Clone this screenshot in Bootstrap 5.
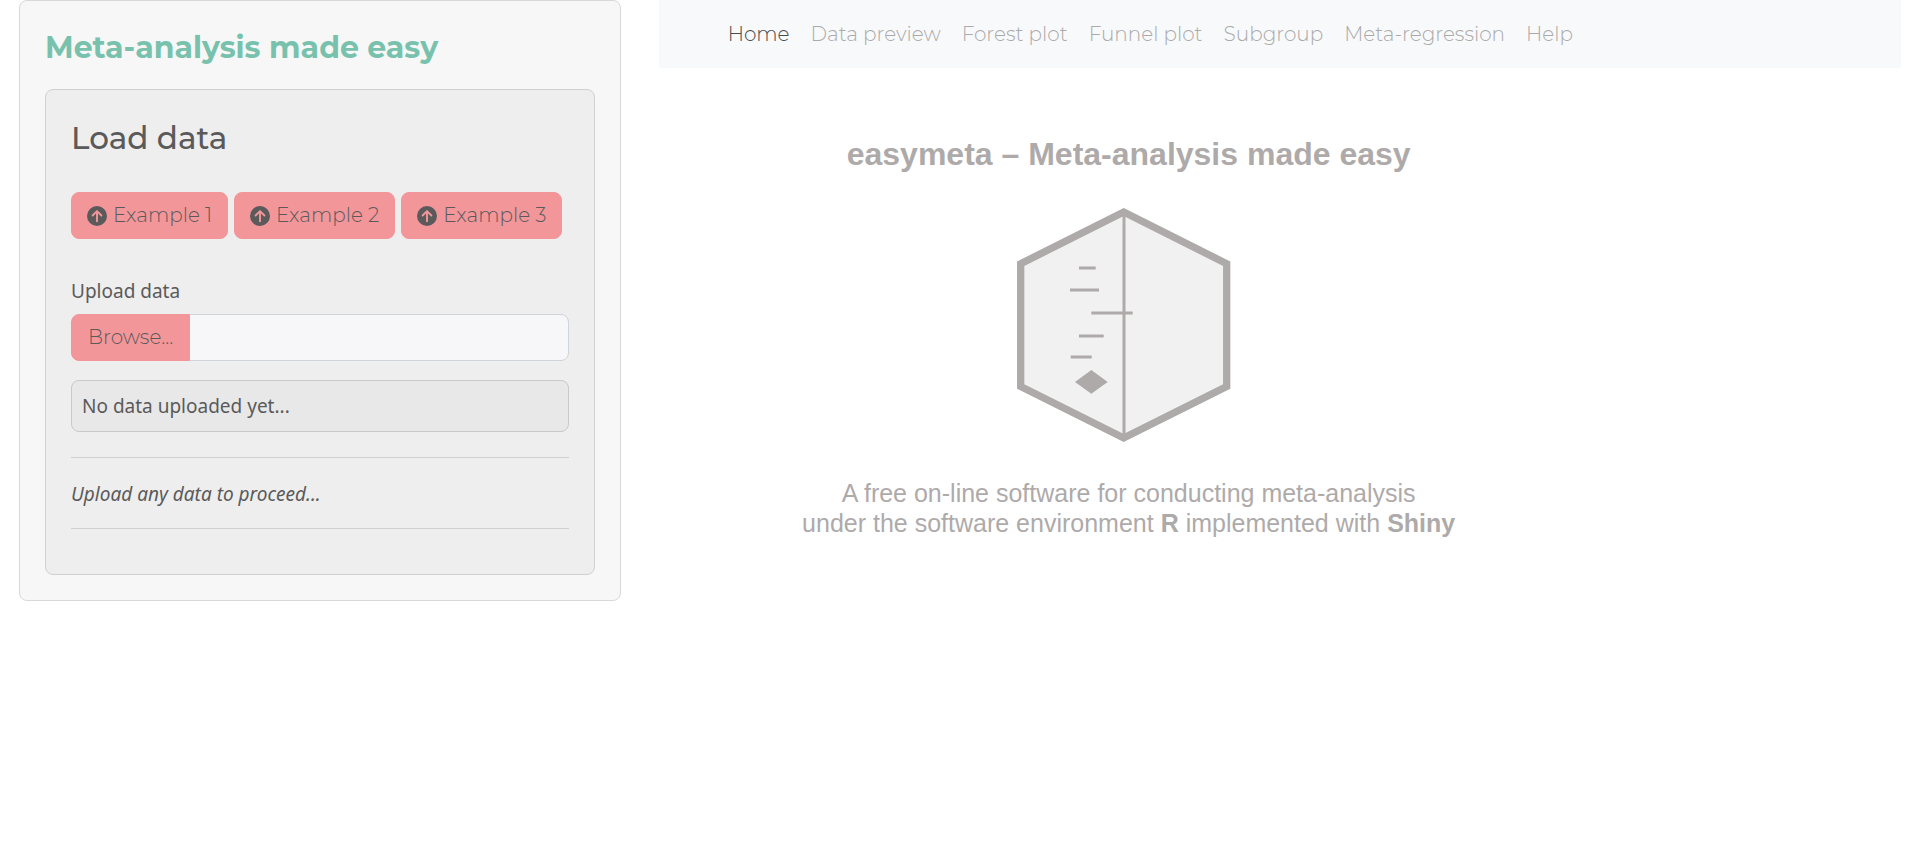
<!DOCTYPE html>
<html lang="en">
<head>
<meta charset="utf-8">
<meta name="viewport" content="width=device-width, initial-scale=1">
<title>easymeta</title>
<link href="https://cdn.jsdelivr.net/npm/bootstrap@5.3.0/dist/css/bootstrap.min.css" rel="stylesheet">
<style>
  body { font-family: "Noto Sans", sans-serif; font-size: 19px; line-height: 30px; color: #5a5a5a; background: #fff; }
  .page { padding: 0 17px 0 0; }
  .side-col { padding: 0 13px 0 19px; }
  .main-col { padding: 0 0 0 25px; }
  .panel { border: 1px solid #d8d8d8; border-radius: 8px; background: #f7f7f7; padding: 25px; }
  .panel .panel { background: #eee; border-color: #d0d0d0; padding-bottom: 45px; }
  .brand, .panel-title, .btn, .nav-link { font-family: Montserrat, Inter, sans-serif; }
  .brand { font-size: 30px; line-height: 36px; font-weight: 700; color: #78c2ad; margin: 4px 0 23px; }
  .panel-title { font-size: 31px; line-height: 36px; font-weight: 500; margin: 5px 0 36px; }
  .btn-pink { --bs-btn-bg: #f3969a; --bs-btn-color: #5a5a5a; --bs-btn-border-color: #f3969a; --bs-btn-hover-bg: #ee8589; --bs-btn-hover-border-color: #ee8589; --bs-btn-border-radius: 8px; font-size: 20px; line-height: 31px; font-weight: 300; padding: 7px 15px; }
  .btn-pink svg { width: 20px; height: 20px; }
  .examples { gap: 6px; margin-bottom: 37px; }
  .examples .btn { gap: 6px; }
  .form-label { margin-bottom: 8px; }
  .file-row { margin-bottom: 19px; }
  .file-row .btn { padding: 7px 16px; }
  .file-row .form-control { background: #f7f7f9; border-color: #ced4da; border-radius: 8px; height: 47px; }
  .status-box { background: #e8e8e8; border: 1px solid #c9c9c9; border-radius: 8px; padding: 10px; }
  .notes { padding-top: 25px; }
  .rule { margin: 0; border-top: 1px solid #aaa; opacity: .45; }
  .hint { padding: 21px 0 19px; }
  .topbar { background: #f8f9fa; padding: 12px 59px; min-height: 68px; }
  .topbar .nav { column-gap: 1px; }
  .topbar .nav-link { font-size: 20px; line-height: 30px; font-weight: 300; padding: 7px 10px; color: #aaa; }
  .topbar .nav-link.active { color: #4a4a4a; }
  .hero { width: 940px; max-width: 100%; padding-top: 68px; font-family: "Liberation Sans", Arial, sans-serif; color: #aeaaaa; }
  .hero-title { font-size: 32px; line-height: 36px; font-weight: 700; margin-bottom: 36px; }
  .hero-text { font-size: 25px; line-height: 30px; margin: 35px 0 0; }
</style>
</head>
<body>
<svg class="d-none" aria-hidden="true">
  <symbol id="arrow-up" viewBox="0 0 20 20">
    <circle cx="10" cy="10" r="10" fill="#5a5a5a"/>
    <path d="M10 15.3V5.5M5.600 9.500 10 5.100l4.400 4.400" fill="none" stroke="#f3969a" stroke-width="1.900" stroke-linecap="round" stroke-linejoin="round"/>
  </symbol>
</svg>
<div class="page">
  <div class="row g-0">
    <aside class="col-4 side-col">
      <div class="panel">
        <h1 class="brand">Meta-analysis made easy</h1>
        <div class="panel">
          <h2 class="panel-title">Load data</h2>
          <div class="d-flex flex-wrap examples">
            <button type="button" class="btn btn-pink d-inline-flex align-items-center"><svg aria-hidden="true"><use href="#arrow-up"/></svg>Example 1</button>
            <button type="button" class="btn btn-pink d-inline-flex align-items-center"><svg aria-hidden="true"><use href="#arrow-up"/></svg>Example 2</button>
            <button type="button" class="btn btn-pink d-inline-flex align-items-center"><svg aria-hidden="true"><use href="#arrow-up"/></svg>Example 3</button>
          </div>
          <label class="form-label d-block" for="upload">Upload data</label>
          <div class="input-group file-row">
            <button type="button" class="btn btn-pink">Browse...</button>
            <input type="text" class="form-control" id="upload" readonly>
          </div>
          <div class="status-box">No data uploaded yet...</div>
          <div class="notes">
            <hr class="rule">
            <div class="hint fst-italic">Upload any data to proceed...</div>
            <hr class="rule">
          </div>
        </div>
      </div>
    </aside>
    <main class="col-8 main-col">
      <nav class="topbar">
        <ul class="nav">
          <li class="nav-item"><a class="nav-link active" href="#" aria-current="page">Home</a></li>
          <li class="nav-item"><a class="nav-link" href="#">Data preview</a></li>
          <li class="nav-item"><a class="nav-link" href="#">Forest plot</a></li>
          <li class="nav-item"><a class="nav-link" href="#">Funnel plot</a></li>
          <li class="nav-item"><a class="nav-link" href="#">Subgroup</a></li>
          <li class="nav-item"><a class="nav-link" href="#">Meta-regression</a></li>
          <li class="nav-item"><a class="nav-link" href="#">Help</a></li>
        </ul>
      </nav>
      <section class="hero text-center">
        <h2 class="hero-title">easymeta – Meta-analysis made easy</h2>
        <svg class="d-block mx-auto" width="223" height="235" viewBox="0 0 223 235" role="img" aria-label="easymeta logo">
          <path d="M106.700 4.100 209.700 55.700V178.600L106.700 229.900 3.700 178.600V55.700Z" fill="#f1f1f1" stroke="#aeaaaa" stroke-width="7.300"/>
          <g stroke="#aeaaaa" stroke-width="3">
            <path d="M107 5V229"/>
            <path d="M62 60h16.700M53 82h29M74.300 105h41.400M62 128h24.700M53.700 149h21"/>
          </g>
          <path d="M74.300 162 90.700 174 74.300 185.700 58 174Z" fill="#aeaaaa"/>
        </svg>
        <p class="hero-text">A free on-line software for conducting meta-analysis<br>under the software environment <strong>R</strong> implemented with <strong>Shiny</strong></p>
      </section>
    </main>
  </div>
</div>
<script src="https://cdn.jsdelivr.net/npm/bootstrap@5.3.0/dist/js/bootstrap.bundle.min.js"></script>
</body>
</html>
